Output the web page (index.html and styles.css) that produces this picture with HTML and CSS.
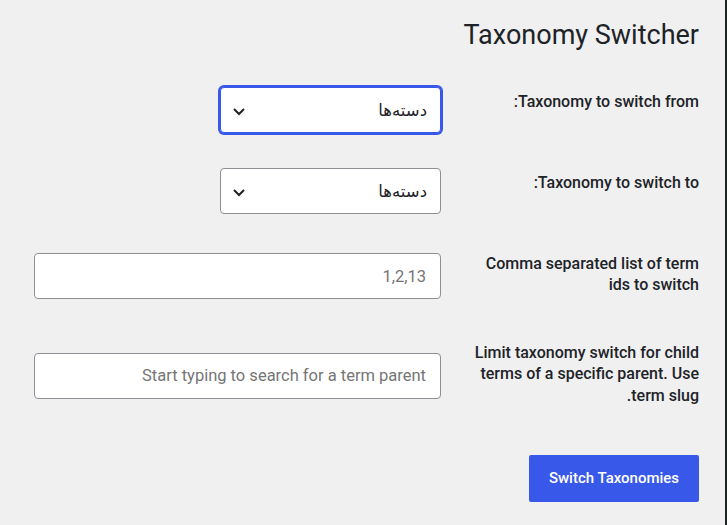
FILE: index.html
```html
<!DOCTYPE html>
<html lang="fa" dir="rtl">
<head>
<meta charset="utf-8">
<title>Taxonomy Switcher</title>
<link rel="stylesheet" href="styles.css">
</head>
<body>
<div class="page">
  <h1 class="title">Taxonomy Switcher</h1>
  <form class="form">
    <div class="row">
      <label class="label">Taxonomy to switch from:</label>
      <div class="field">
        <div class="select is-focused">
          <span class="select-value">دسته‌ها</span>
          <svg class="chevron" width="14" height="9" viewBox="0 0 14 9"><path d="M2 2 L7 7 L12 2" fill="none" stroke="#1d2327" stroke-width="2"/></svg>
        </div>
      </div>
    </div>
    <div class="row">
      <label class="label">Taxonomy to switch to:</label>
      <div class="field">
        <div class="select">
          <span class="select-value">دسته‌ها</span>
          <svg class="chevron" width="14" height="9" viewBox="0 0 14 9"><path d="M2 2 L7 7 L12 2" fill="none" stroke="#1d2327" stroke-width="2"/></svg>
        </div>
      </div>
    </div>
    <div class="row">
      <label class="label">Comma separated list of term ids to switch</label>
      <div class="field">
        <input class="input" type="text" placeholder="1,2,13">
      </div>
    </div>
    <div class="row">
      <label class="label">Limit taxonomy switch for child terms of a specific parent. Use term slug.</label>
      <div class="field">
        <input class="input" type="text" placeholder="Start typing to search for a term parent">
      </div>
    </div>
    <div class="actions">
      <button class="button" type="button">Switch Taxonomies</button>
    </div>
  </form>
</div>
</body>
</html>
```
FILE: styles.css
```css
* { box-sizing: border-box; }
html, body { margin: 0; padding: 0; }
body {
  background: #f0f0f1;
  color: #1d2327;
  font-family: Roboto, "Noto Sans", "DejaVu Sans", sans-serif;
  direction: rtl;
}
.page {
  min-height: 525px;
  padding: 0 26px 0 34px;
  border-right: 2px solid #1d2327;
  overflow: hidden;
}
.title {
  margin: 18px 0 0;
  font-size: 27px;
  line-height: 35px;
  font-weight: 400;
  color: #1d2327;
}
.form { margin-top: 16.5px; }
.row {
  display: grid;
  grid-template-columns: 235px 1fr;
  column-gap: 23px;
  align-items: center;
}
.label {
  align-self: start;
  padding: 21px 0 25px;
  font-size: 16px;
  line-height: 21.5px;
  font-weight: 500;
  color: #1d2327;
}
.field { padding: 17.5px 0; }
.select {
  width: 221px;
  height: 46px;
  background: #fff;
  border: 1px solid #8c8f94;
  border-radius: 4px;
  display: flex;
  align-items: center;
  justify-content: space-between;
  padding: 0 13px 0 11px;
  font-family: "Noto Sans", "DejaVu Sans", sans-serif;
  font-size: 16.5px;
  color: #1d2327;
}
.select-value { line-height: 20px; }
.select.is-focused {
  border-color: #3858e9;
  box-shadow: 0 0 0 2px #3858e9;
}
.chevron { display: block; margin-top: 2px; }
.input {
  display: block;
  width: 100%;
  height: 46px;
  background: #fff;
  border: 1px solid #8c8f94;
  border-radius: 4px;
  padding: 0 14px;
  font-family: Roboto, sans-serif;
  font-size: 16.5px;
  color: #1d2327;
  direction: rtl;
}
.input::placeholder { color: #757575; opacity: 1; }
.actions { margin-top: 24px; }
.button {
  width: 170px;
  height: 46.5px;
  background: #3858e9;
  color: #fff;
  border: 0;
  border-radius: 2px;
  font-family: Roboto, sans-serif;
  font-size: 15px;
  font-weight: 500;
  padding: 0;
}
```
